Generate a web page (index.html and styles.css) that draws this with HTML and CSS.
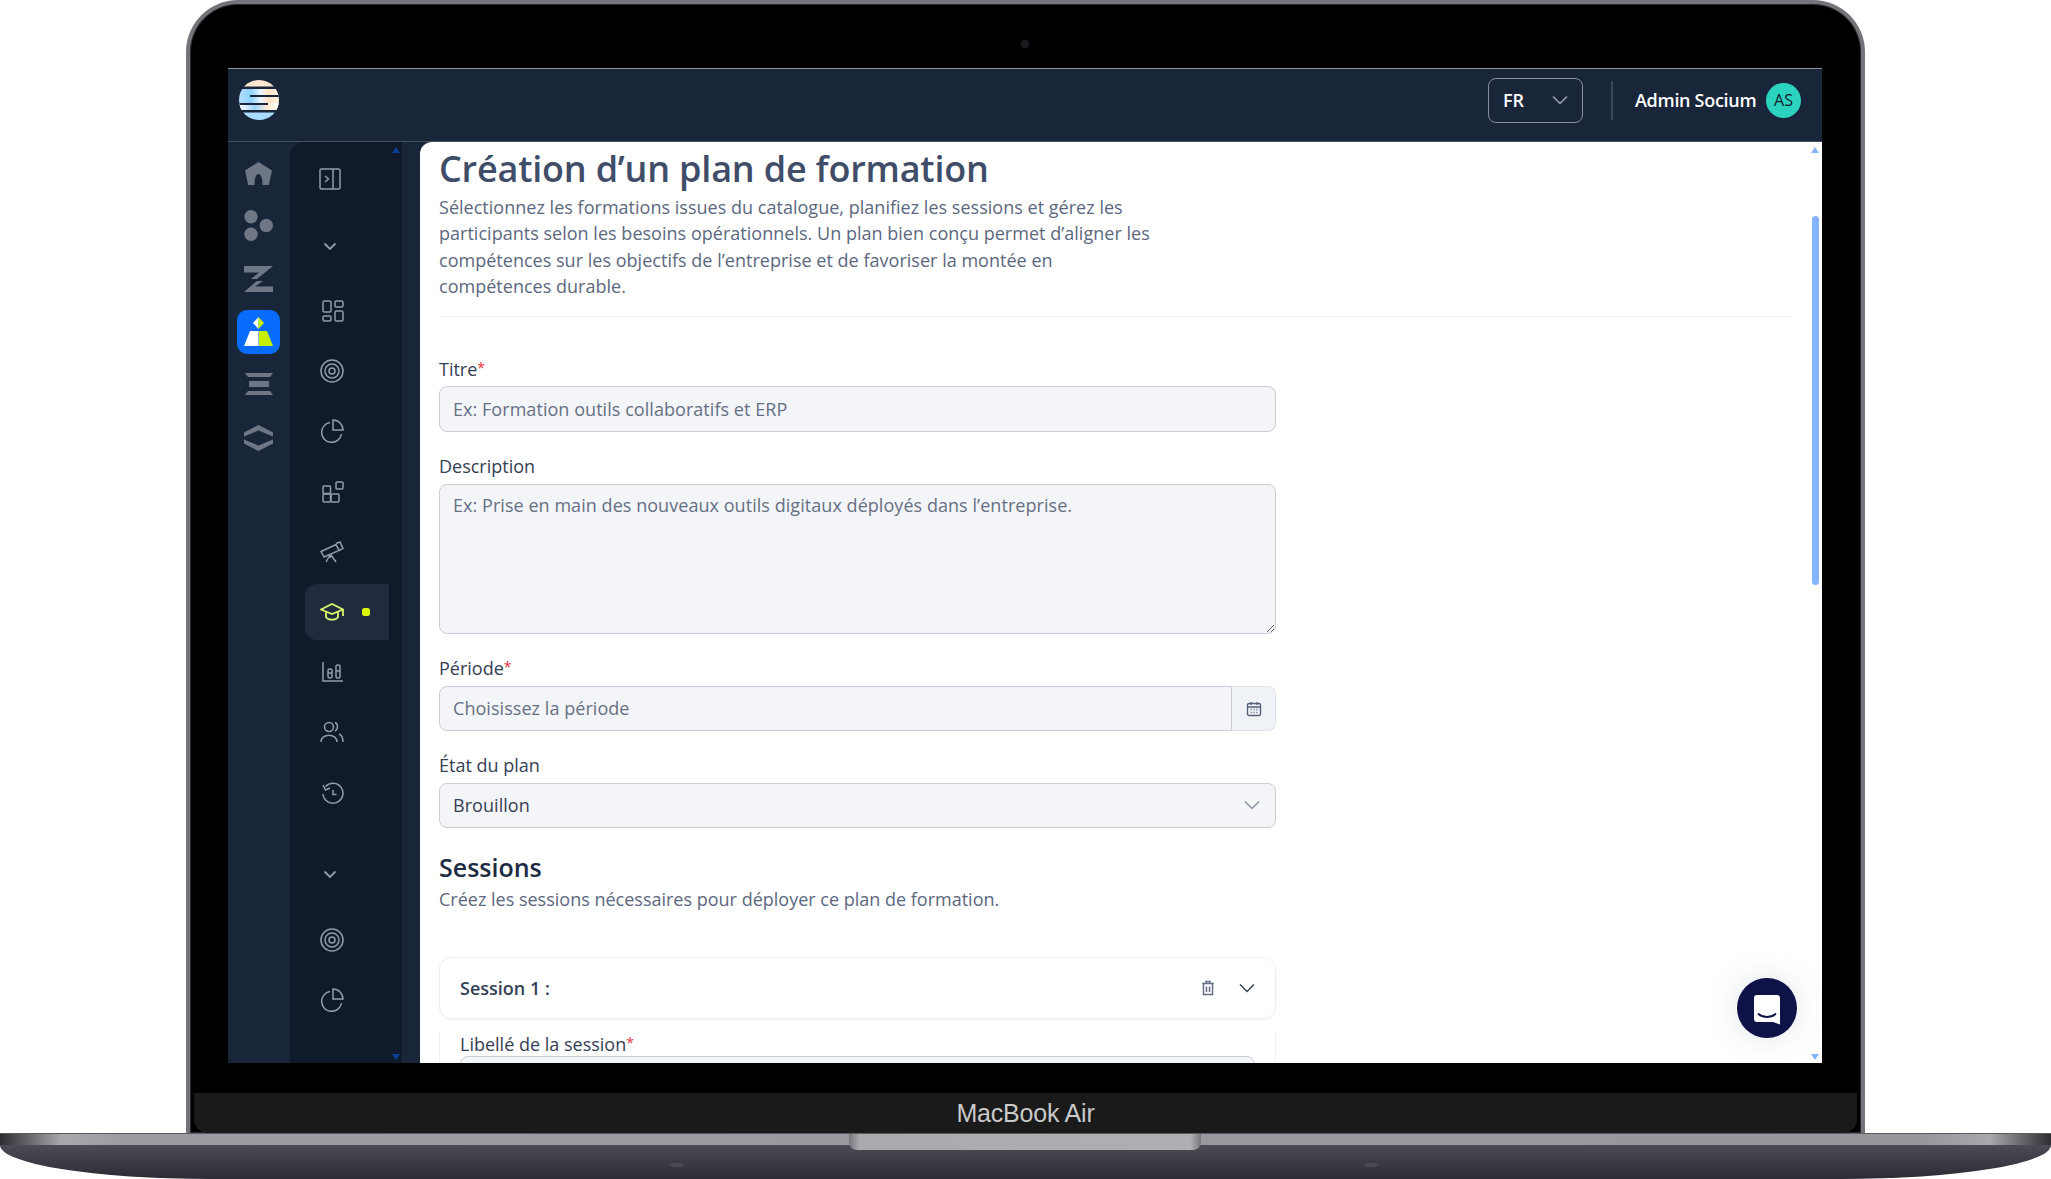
FILE: index.html
```html
<!DOCTYPE html>
<html lang="fr">
<head>
<meta charset="utf-8">
<title>Création d'un plan de formation</title>
<link rel="stylesheet" href="styles.css">
</head>
<body>
<div class="device">
  <div class="lid">
    <div class="camera"></div>
    <div class="screen">
      <header class="topbar">
        <svg class="logo" viewBox="0 0 40 40"><defs><linearGradient id="lg" x1="0" y1="0" x2="1" y2="0"><stop offset="0" stop-color="#b5e0ff"/><stop offset=".3" stop-color="#8fd0ff"/><stop offset=".55" stop-color="#eef6ff"/><stop offset=".75" stop-color="#ffe2c2"/><stop offset="1" stop-color="#fff3e4"/></linearGradient><linearGradient id="lg2" x1="0" y1="0" x2="1" y2="0"><stop offset="0" stop-color="#fff"/><stop offset=".4" stop-color="#9dd6ff"/><stop offset=".7" stop-color="#ffe8d0"/><stop offset="1" stop-color="#fff"/></linearGradient><clipPath id="lc"><circle cx="20" cy="20" r="20"/></clipPath></defs><g clip-path="url(#lc)"><rect y="0" width="40" height="6.500" fill="#ffe8cf"/><rect y="9" width="40" height="21" fill="url(#lg)"/><rect y="23" width="40" height="7" fill="url(#lg2)"/><rect y="32.500" width="40" height="7.500" fill="#a9dcff"/><path d="M11 16H40M0 24H29" stroke="#19263a" stroke-width="2" fill="none"/></g></svg>
        <div class="top-actions">
          <div class="lang"><span>FR</span><svg class="lang-chev" viewBox="0 0 16 10"><path d="M1 1.500l7 7 7-7"/></svg></div>
          <div class="vsep"></div>
          <span class="user">Admin Socium</span>
          <span class="avatar">AS</span>
        </div>
      </header>
      <div class="workspace">
        <nav class="rail">
          <svg class="r-home" viewBox="0 0 27 23"><path d="M13.500 0L27 8.500 23.800 23H17.500C17.500 16 16 12 13.500 12S9.500 16 9.500 23H3.200L0 8.500Z"/></svg>
          <svg class="r-dots" viewBox="0 0 29 31"><circle cx="7" cy="6.700" r="6.700"/><circle cx="22.300" cy="15.500" r="6.700"/><circle cx="7" cy="24.300" r="6.700"/></svg>
          <svg class="r-z" viewBox="0 0 29 26"><path d="M0 0H29L13 13H7L15 6.500H0ZM29 26H0L13 15H19L11 20.500H29Z"/></svg>
          <span class="r-tile"><svg viewBox="0 0 29 30"><path d="M14.500 0V12L9 6Z" fill="#fff"/><path d="M14.500 0L20 6 14.500 12Z" fill="#c6f000"/><path d="M14.500 14H6L0 29H14.500Z" fill="#fff"/><path d="M15 14H23L29 29H15Z" fill="#c6f000"/></svg></span>
          <svg class="r-stack" viewBox="0 0 28 22"><path d="M0 0H28L25 4H3ZM4 8H24V14H4ZM3 18H25L28 22H0Z"/></svg>
          <svg class="r-hex" viewBox="0 0 29 26"><path d="M14.500 0L29 7.500V11.500L14.500 5.500 0 11.500V7.500ZM0 14.500L14.500 20.500 29 14.500V18.500L14.500 26 0 18.500Z"/></svg>
        </nav>
        <aside class="subnav">
          <i class="tri tri-up-d"></i>
          <svg class="ico toggle" viewBox="0 0 22 22"><rect x="1" y="1" width="20" height="20" rx="1.500"/><path d="M14 1v20M6 8l3.500 3L6 14"/></svg>
          <svg class="chev chev1" viewBox="0 0 14 9"><path d="M1.500 1.500L7 7l5.500-5.500"/></svg>
          <svg class="ico grid" viewBox="0 0 22 22"><rect x="1" y="1" width="8" height="11" rx="1.500"/><rect x="13" y="1" width="8" height="6" rx="1.500"/><rect x="1" y="16" width="8" height="5" rx="1.500"/><rect x="13" y="11" width="8" height="10" rx="1.500"/></svg>
          <svg class="ico target" viewBox="0 0 24 24"><circle cx="12" cy="12" r="11"/><circle cx="12" cy="12" r="7"/><circle cx="12" cy="12" r="3"/></svg>
          <svg class="ico pie" viewBox="0 0 24 24"><path d="M10 3.500A10 10 0 1 0 21.500 15"/><path d="M13 1a10 10 0 0 1 10 10H13Z"/></svg>
          <svg class="ico widgets" viewBox="0 0 22 22"><rect x="1" y="5" width="7.500" height="7.500" rx="1"/><rect x="1" y="13" width="7.500" height="8" rx="1"/><rect x="9" y="13" width="8" height="8" rx="1"/><rect x="14" y="1" width="7" height="7" rx="1"/></svg>
          <svg class="ico scope" viewBox="0 0 24 22"><path d="M1 10.500l15-7 3 6-15 6.500ZM16 2.500l4-1.500 3 6.500-4 2M10 14l-4 7M11 14l5 7M10.500 14v3"/></svg>
          <div class="sub-active">
            <svg class="cap" viewBox="0 0 24 18"><path d="M1 6.500L12 1l11 5.500L12 11ZM6 9v5c2 3.500 10 3.500 12 0V9M23 6.500V13"/></svg>
            <i class="active-dot"></i>
          </div>
          <svg class="ico bars" viewBox="0 0 22 22"><path d="M1 1v19h20"/><rect x="6" y="8" width="4" height="9" rx="1.500"/><rect x="14" y="4" width="4" height="13" rx="1.500"/><path d="M6 12h4M14 10h4"/></svg>
          <svg class="ico users" viewBox="0 0 24 22"><circle cx="9" cy="6" r="4.500"/><path d="M1 21c0-9 16-9 16 0M15 1.500c3 .5 3.500 7 0 8.500M19 13c2.500 1 4 4 4 8"/></svg>
          <svg class="ico hist" viewBox="0 0 22 22"><path d="M3.500 3.500A10 10 0 1 1 1 11M1 2l2.500 5L8 5M11 7v4.500h3.500"/></svg>
          <svg class="chev chev2" viewBox="0 0 14 9"><path d="M1.500 1.500L7 7l5.500-5.500"/></svg>
          <svg class="ico target t2" viewBox="0 0 24 24"><circle cx="12" cy="12" r="11"/><circle cx="12" cy="12" r="7"/><circle cx="12" cy="12" r="3"/></svg>
          <svg class="ico pie p2" viewBox="0 0 24 24"><path d="M10 3.500A10 10 0 1 0 21.500 15"/><path d="M13 1a10 10 0 0 1 10 10H13Z"/></svg>
          <i class="tri tri-down-d"></i>
        </aside>
        <main class="main">
          <i class="tri tri-up-l"></i>
          <i class="scrollbar"></i>
          <i class="tri tri-down-l"></i>
          <h1 class="title">Création d’un plan de formation</h1>
          <p class="lead">Sélectionnez les formations issues du catalogue, planifiez les sessions et gérez les<br>participants selon les besoins opérationnels. Un plan bien conçu permet d’aligner les<br>compétences sur les objectifs de l’entreprise et de favoriser la montée en<br>compétences durable.</p>
          <hr class="rule">
          <form class="form">
            <div class="field field-first">
              <label class="label">Titre<b class="req">*</b></label>
              <input class="control" placeholder="Ex: Formation outils collaboratifs et ERP">
            </div>
            <div class="field">
              <label class="label">Description</label>
              <textarea class="control area" placeholder="Ex: Prise en main des nouveaux outils digitaux déployés dans l’entreprise."></textarea>
            </div>
            <div class="field">
              <label class="label">Période<b class="req">*</b></label>
              <div class="group">
                <input class="control group-input" placeholder="Choisissez la période">
                <span class="addon"><svg viewBox="0 0 16 16"><rect x="1.500" y="2.500" width="13" height="12" rx="1.500"/><path d="M1.500 6h13M5 1v3M11 1v3"/><path class="dots" d="M4.500 8.500h1.500M7.300 8.500h1.500M10 8.500h1.500M4.500 11.500h1.500M7.300 11.500h1.500M10 11.500h1.500"/></svg></span>
              </div>
            </div>
            <div class="field">
              <label class="label">État du plan</label>
              <div class="control select"><span>Brouillon</span><svg viewBox="0 0 16 10"><path d="M1 1.500l7 7 7-7"/></svg></div>
            </div>
            <h2 class="h2">Sessions</h2>
            <p class="sub">Créez les sessions nécessaires pour déployer ce plan de formation.</p>
            <div class="session-card">
              <strong>Session 1 :</strong>
              <svg class="trash" viewBox="0 0 14 16"><path d="M1 3.500h12M5 3.500V1.500h4v2M2.500 3.500v11h9v-11M5.500 6.500v5.500M8.500 6.500v5.500"/></svg>
              <svg class="card-chev" viewBox="0 0 16 10"><path d="M1 1.500l7 7 7-7"/></svg>
            </div>
            <div class="session-body">
              <label class="label">Libellé de la session<b class="req">*</b></label>
              <div class="control stub"></div>
            </div>
          </form>
          <button class="chat" type="button"><svg viewBox="0 0 26 30"><path d="M3 0H23A3 3 0 0 1 26 3V29.500L19 27H3A3 3 0 0 1 0 24V3A3 3 0 0 1 3 0Z" fill="#fff"/><path d="M4.500 19C9 23 17 23 21.500 19" fill="none" stroke="#0d1247" stroke-width="1.800" stroke-linecap="round"/></svg></button>
        </main>
      </div>
    </div>
    <div class="bezel-gap"></div>
    <div class="chin">MacBook Air</div>
  </div>
  <div class="base">
    <div class="strip"></div>
    <div class="lower"></div>
    <div class="notch"></div>
    <i class="foot foot-l"></i>
    <i class="foot foot-r"></i>
  </div>
</div>
</body>
</html>
```

FILE: styles.css
```css
* { box-sizing: border-box; }
html, body { margin: 0; padding: 0; background: #fff; }
body { font-family: "Open Sans", "Liberation Sans", sans-serif; overflow: hidden; }
svg { display: block; }

.device { width: 2051px; height: 1179px; display: flex; flex-direction: column; align-items: center; position: relative; overflow: hidden; }

.lid {
  width: 1679px; height: 1133px; flex: none; position: relative;
  background: #000;
  border: 4px solid #74747a; border-bottom: 0;
  border-radius: 52px 52px 0 0;
  padding: 64px 39px 0 38px;
  display: flex; flex-direction: column;
  box-shadow: inset 0 0 0 1px #2a2a2c;
}
.camera { position: absolute; left: 831px; top: 36px; width: 8px; height: 8px; border-radius: 50%; background: #1c1c20; }

.screen { height: 995px; flex: none; display: flex; flex-direction: column; background: #19263a; border-top: 1px solid #8d929a; overflow: hidden; }
.topbar { height: 73px; flex: none; display: flex; align-items: center; justify-content: space-between; padding: 0 21px 10px 11px; border-bottom: 1px solid #45505f; }
.logo { width: 40px; height: 40px; }
.top-actions { display: flex; align-items: center; }
.lang { width: 95px; height: 45px; border: 1px solid #8a919d; border-radius: 8px; display: flex; align-items: center; justify-content: space-between; padding: 0 14px 0 14px; color: #fff; font-size: 18px; font-weight: 600; }
.lang-chev { width: 16px; height: 10px; fill: none; stroke: #9ba2ad; stroke-width: 1.5; }
.vsep { width: 2px; height: 39px; background: #3a4659; margin: 0 22px 0 28px; }
.user { color: #fff; font-size: 18px; font-weight: 600; margin-right: 11px; width: 120px; white-space: nowrap; letter-spacing: -.3px; }
.avatar { width: 35px; height: 35px; border-radius: 50%; background: #2bd3bf; color: #0f1a2a; font-size: 16px; display: flex; align-items: center; justify-content: center; }

.workspace { flex: 1; display: flex; min-height: 0; }

.rail { width: 62px; flex: none; display: flex; flex-direction: column; align-items: center; padding: 20px 1px 0 0; }
.rail svg { fill: #6f7787; flex: none; }
.r-home { width: 27px; height: 23px; }
.r-dots { width: 29px; height: 31px; margin-top: 25px; }
.r-z { width: 29px; height: 26px; margin-top: 25px; }
.r-tile { width: 43px; height: 44px; margin-top: 18px; background: #0a6cff; border-radius: 10px; display: flex; align-items: center; justify-content: center; flex: none; }
.r-tile svg { width: 29px; height: 30px; }
.r-stack { width: 28px; height: 22px; margin-top: 19px; }
.r-hex { width: 29px; height: 26px; margin-top: 30px; }

.subnav { width: 112px; flex: none; background: #0f1a2a; border-radius: 14px 0 0 0; display: flex; flex-direction: column; padding-left: 32px; position: relative; }
.ico { fill: none; stroke: #949ca9; stroke-width: 1.500; flex: none; }
.chev { width: 14px; height: 9px; fill: none; stroke: #949ca9; stroke-width: 1.800; flex: none; margin-left: 1px; }
.toggle { width: 22px; height: 22px; margin-top: 26px; margin-left: -3px; }
.chev1 { margin-top: 52px; }
.grid { width: 22px; height: 22px; margin-top: 49px; }
.target { width: 24px; height: 24px; margin-top: 37px; margin-left: -2px; }
.pie { width: 24px; height: 24px; margin-top: 36px; margin-left: -2px; }
.widgets { width: 22px; height: 22px; margin-top: 38px; }
.scope { width: 24px; height: 22px; margin-top: 38px; margin-left: -2px; }
.sub-active { width: 84px; height: 56px; margin: 21px 0 0 -17px; flex: none; background: #202c3e; border-radius: 12px 0 0 12px; display: flex; align-items: center; padding-left: 17px; }
.cap { width: 24px; height: 18px; fill: none; stroke: #dcf56a; stroke-width: 1.800; margin-left: -2px; }
.active-dot { width: 8px; height: 8px; border-radius: 2.500px; background: #d9f800; margin-left: 18px; }
.bars { width: 22px; height: 22px; margin-top: 21px; }
.users { width: 24px; height: 22px; margin-top: 38px; margin-left: -2px; }
.hist { width: 22px; height: 24px; margin-top: 39px; }
.chev2 { margin-top: 64px; }
.t2 { margin-top: 49px; }
.p2 { margin-top: 36px; }

.tri { position: absolute; width: 0; height: 0; border-left: 4.500px solid transparent; border-right: 4.500px solid transparent; }
.tri-up-d { right: 2px; top: 5px; border-bottom: 6px solid #0b3f99; }
.tri-down-d { right: 2px; bottom: 3px; border-top: 6px solid #0b3f99; }
.tri-up-l { right: 3px; top: 5px; border-bottom: 6px solid #85b4ff; }
.tri-down-l { right: 3px; bottom: 3px; border-top: 6px solid #85b4ff; }
.scrollbar { position: absolute; right: 3px; top: 74px; width: 7px; height: 369px; background: #85b4ff; border-radius: 3.500px; }

.main { flex: 1; min-width: 0; margin-left: 18px; background: #fff; border-radius: 12px 0 0 0; padding: 0 32px 0 19px; position: relative; overflow: hidden; color: #344054; }
.title { margin: 0; padding-top: 3px; font-size: 36px; line-height: 48px; font-weight: 600; color: #3f4d68; letter-spacing: -.2px; }
.lead { margin: 1px 0 0; font-size: 18px; line-height: 26.3px; color: #5b6880; letter-spacing: .02px; white-space: nowrap; }
.rule { border: 0; border-top: 1px solid #eef0f3; margin: 17px 0 41px; height: 0; }

.form { width: 837px; display: flex; flex-direction: column; }
.field { display: flex; flex-direction: column; margin-bottom: 23px; }
.label { font-size: 18px; line-height: 22px; margin-bottom: 7px; color: #344054; }
.field-first .label { margin-bottom: 6px; }
.req { color: #e5323a; font-weight: 400; font-size: 14px; vertical-align: 3px; line-height: 0; }
.control { width: 100%; height: 46px; background: #f4f5f8; border: 1px solid #c9ced8; border-radius: 8px; padding: 0 13px 1px; font: 18px "Open Sans", sans-serif; color: #344054; outline: 0; letter-spacing: .05px; }
.control::placeholder { color: #667085; opacity: 1; }
.area { height: 150px; padding-top: 9px; resize: vertical; line-height: 22px; }
.group { display: flex; }
.group-input { flex: 1; height: 45px; border-radius: 8px 0 0 8px; }
.addon { width: 44px; flex: none; background: #eff2f7; border: 1px solid #dfe3ea; border-left: 0; border-radius: 0 8px 8px 0; display: flex; align-items: center; justify-content: center; }
.addon svg { width: 16px; height: 16px; fill: none; stroke: #56627a; stroke-width: 1.400; }
.addon .dots { stroke: #8a93a6; }
.select { height: 45px; display: flex; align-items: center; justify-content: space-between; padding-right: 15px; }
.select svg { width: 16px; height: 10px; fill: none; stroke: #8d95a3; stroke-width: 1.500; }
.h2 { margin: 0; font-size: 25px; line-height: 32px; font-weight: 600; color: #1d2b44; }
.sub { margin: 4px 0 0; font-size: 18px; line-height: 24px; color: #5b6880; }
.session-card { margin-top: 46px; height: 62px; flex: none; border: 1px solid #eceef2; border-radius: 12px; display: flex; align-items: center; padding: 0 20px 1px; box-shadow: 0 1px 2px rgba(16,24,40,.05); }
.session-card strong { font-size: 18px; font-weight: 600; color: #344054; flex: 1; }
.trash { width: 14px; height: 16px; fill: none; stroke: #667085; stroke-width: 1.500; margin-right: 24px; }
.card-chev { width: 16px; height: 10px; fill: none; stroke: #344054; stroke-width: 1.500; }
.session-body { margin-top: 12px; border-left: 1px solid #eef0f3; border-right: 1px solid #eef0f3; padding: 2px 20px 0; }
.session-body .label { margin-bottom: 17px; }
.stub { height: 46px; }

.chat { position: absolute; right: 25px; bottom: 25px; width: 60px; height: 60px; border-radius: 50%; border: 0; padding: 0; background: #0d1247; box-shadow: 0 0 30px rgba(120,130,160,.22); display: flex; align-items: center; justify-content: center; }
.chat svg { width: 26px; height: 30px; margin-top: 3px; }

.bezel-gap { height: 30px; flex: none; }
.chin { height: 40px; flex: none; margin: 0 -35px 0 -34px; background: #1a1a1a; border-radius: 0 0 14px 14px; display: flex; align-items: center; justify-content: center; color: #c9c9c9; font: 25px "Liberation Sans", sans-serif; letter-spacing: -.2px; }

.base { width: 2051px; height: 46px; flex: none; position: relative; }
.strip { height: 12px; background: linear-gradient(90deg, #2c2d31 0, #a8a9ad 3%, #9b9ca2 6%, #97989e 94%, #a8a9ad 97%, #2c2d31 100%); border-top: 1px solid #5a5b60; }
.lower { height: 34px; background: linear-gradient(180deg, #4b4c55 0, #3c3d46 45%, #2a2b33 100%); border-radius: 0 0 210px 210px / 0 0 34px 34px; }
.notch { position: absolute; left: 849px; top: 1px; width: 352px; height: 16px; background: linear-gradient(90deg, #77787c, #a9aaae 3%, #aeafb3 97%, #77787c); border-radius: 0 0 8px 8px; }
.foot { position: absolute; top: 30px; width: 14px; height: 4px; border-radius: 50%; background: #4a4b52; }
.foot-l { left: 670px; }
.foot-r { left: 1364px; }
```
